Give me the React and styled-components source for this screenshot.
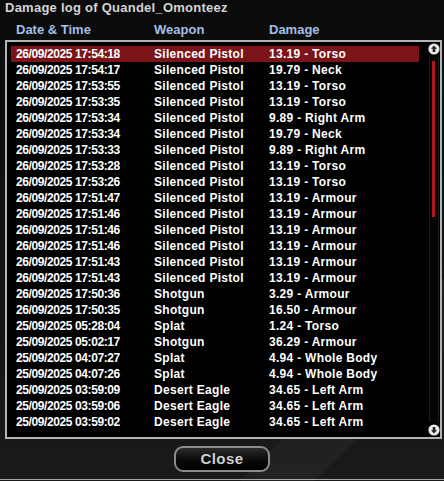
import React from 'react';
import styled, { createGlobalStyle } from 'styled-components';

const GlobalStyle = createGlobalStyle`
  html, body {
    margin: 0;
    padding: 0;
    background: #111;
  }
  * { box-sizing: border-box; }
`;

const rows = [
  ['26/09/2025 17:54:18', 'Silenced Pistol', '13.19 - Torso'],
  ['26/09/2025 17:54:17', 'Silenced Pistol', '19.79 - Neck'],
  ['26/09/2025 17:53:55', 'Silenced Pistol', '13.19 - Torso'],
  ['26/09/2025 17:53:35', 'Silenced Pistol', '13.19 - Torso'],
  ['26/09/2025 17:53:34', 'Silenced Pistol', '9.89 - Right Arm'],
  ['26/09/2025 17:53:34', 'Silenced Pistol', '19.79 - Neck'],
  ['26/09/2025 17:53:33', 'Silenced Pistol', '9.89 - Right Arm'],
  ['26/09/2025 17:53:28', 'Silenced Pistol', '13.19 - Torso'],
  ['26/09/2025 17:53:26', 'Silenced Pistol', '13.19 - Torso'],
  ['26/09/2025 17:51:47', 'Silenced Pistol', '13.19 - Armour'],
  ['26/09/2025 17:51:46', 'Silenced Pistol', '13.19 - Armour'],
  ['26/09/2025 17:51:46', 'Silenced Pistol', '13.19 - Armour'],
  ['26/09/2025 17:51:46', 'Silenced Pistol', '13.19 - Armour'],
  ['26/09/2025 17:51:43', 'Silenced Pistol', '13.19 - Armour'],
  ['26/09/2025 17:51:43', 'Silenced Pistol', '13.19 - Armour'],
  ['26/09/2025 17:50:36', 'Shotgun', '3.29 - Armour'],
  ['26/09/2025 17:50:35', 'Shotgun', '16.50 - Armour'],
  ['25/09/2025 05:28:04', 'Splat', '1.24 - Torso'],
  ['25/09/2025 05:02:17', 'Shotgun', '36.29 - Armour'],
  ['25/09/2025 04:07:27', 'Splat', '4.94 - Whole Body'],
  ['25/09/2025 04:07:26', 'Splat', '4.94 - Whole Body'],
  ['25/09/2025 03:59:09', 'Desert Eagle', '34.65 - Left Arm'],
  ['25/09/2025 03:59:06', 'Desert Eagle', '34.65 - Left Arm'],
  ['25/09/2025 03:59:02', 'Desert Eagle', '34.65 - Left Arm'],
];

const ArrowButton = ({ down }) => (
  <svg width="12" height="12" viewBox="0 0 12 12">
    <circle cx="6" cy="6" r="5.6" fill="#e8e8e8" />
    <g transform={down ? 'rotate(180 6 6)' : undefined}>
      <path d="M6 2.6 L9 5.8 H7.3 V9 H4.7 V5.8 H3 Z" fill="#222" />
    </g>
  </svg>
);

const App = () => (
  <>
    <GlobalStyle />
    <Window>
      <Title>Damage log of Quandel_Omonteez</Title>
      <HeaderRow>
        <HeadCell>Date &amp; Time</HeadCell>
        <HeadCell>Weapon</HeadCell>
        <HeadCell>Damage</HeadCell>
      </HeaderRow>
      <ListBox>
        <List>
          {rows.map((r, i) => (
            <Row key={`row${i}`} selected={i === 0}>
              <Cell $tight>{r[0]}</Cell>
              <Cell>{r[1]}</Cell>
              <Cell>{r[2]}</Cell>
            </Row>
          ))}
        </List>
        <ScrollBar>
          <ArrowButton />
          <Track>
            <Thumb />
          </Track>
          <ArrowButton down />
        </ScrollBar>
      </ListBox>
      <Footer>
        <CloseButton>Close</CloseButton>
      </Footer>
      <BottomStrip />
    </Window>
  </>
);

export default App;

const Window = styled.div`
  width: 444px;
  height: 481px;
  display: flex;
  flex-direction: column;
  overflow: hidden;
  font-family: 'Liberation Sans', Arial, sans-serif;
  font-weight: bold;
  background:
    linear-gradient(135deg, transparent 0 78%, rgba(255, 255, 255, 0.035) 78% 86%, transparent 86%),
    linear-gradient(180deg, #0b0b0b 0%, #101010 40%, #1a1a1a 100%);
`;

const Title = styled.div`
  height: 22px;
  padding: 0 0 0 5px;
  font-size: 13px;
  line-height: 16px;
  letter-spacing: 0.25px;
  color: #d4d4d4;
`;

const HeaderRow = styled.div`
  display: grid;
  grid-template-columns: 138px 115px 1fr;
  height: 16px;
  padding-left: 16px;
  margin-bottom: 2px;
`;

const HeadCell = styled.div`
  font-size: 13px;
  line-height: 16px;
  color: #a3bfe6;
`;

const ListBox = styled.div`
  display: flex;
  height: 399px;
  margin: 0 2px 0 5px;
  border: 2px solid #b4b4b4;
  background: #000;
`;

const List = styled.div`
  flex: 1;
  padding: 4px 0 0 4px;
`;

const Row = styled.div`
  display: grid;
  grid-template-columns: 138px 115px 1fr;
  height: 16px;
  padding-left: 5px;
  font-size: 12px;
  line-height: 16px;
  color: #fff;
  background: ${p => (p.selected ? '#7a1419' : 'transparent')};
`;

const Cell = styled.div`
  white-space: nowrap;
  letter-spacing: ${p => (p.$tight ? '-0.4px' : '0.3px')};
`;

const ScrollBar = styled.div`
  width: 13px;
  margin-left: 8px;
  display: flex;
  flex-direction: column;
  align-items: center;
  padding: 1px 0 1px;
`;

const Track = styled.div`
  flex: 1;
  width: 10px;
  margin: 2px 0;
  display: flex;
  justify-content: center;
  border-left: 1px solid #1c1c1c;
  border-right: 1px solid #1c1c1c;
  background: #050505;
  padding-top: 4px;
`;

const Thumb = styled.div`
  width: 3px;
  height: 156px;
  background: #b0151c;
`;

const Footer = styled.div`
  display: flex;
  justify-content: center;
  padding-top: 7px;
  height: 40px;
`;

const CloseButton = styled.div`
  width: 96px;
  height: 26px;
  border: 2px solid #8c8c8c;
  border-radius: 9px;
  background: linear-gradient(180deg, #2a2a2a 0%, #0a0a0a 55%, #000 100%);
  color: #cfcfcf;
  font-size: 15px;
  line-height: 22px;
  text-align: center;
  letter-spacing: 0.4px;
`;

const BottomStrip = styled.div`
  height: 1px;
  background: #aaa9a0;
`;
